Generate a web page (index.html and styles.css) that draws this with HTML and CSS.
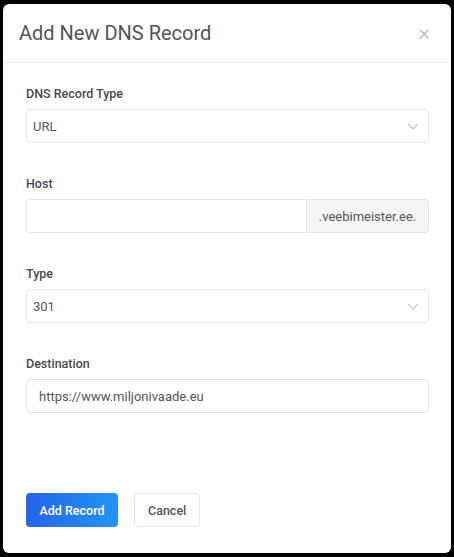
FILE: index.html
```html
<!DOCTYPE html>
<html lang="en">
<head>
    <meta charset="UTF-8">
    <title>Add New DNS Record</title>
    <link rel="stylesheet" href="styles.css">
</head>
<body>
    <div class="modal">
        <div class="modal-header">
            <h2>Add New DNS Record</h2>
            <span class="close">&times;</span>
        </div>

        <form class="modal-body">
            <div class="group">
                <label>DNS Record Type</label>
                <div class="select">
                    <span>URL</span>
                    <svg width="12" height="7" viewBox="0 0 12 7"><path d="M1 1l5 5 5-5" fill="none" stroke="#c4c4cc" stroke-width="1.2"/></svg>
                </div>
            </div>

            <div class="group">
                <label>Host</label>
                <div class="input-group">
                    <input type="text" class="input">
                    <span class="addon">.veebimeister.ee.</span>
                </div>
            </div>

            <div class="group">
                <label>Type</label>
                <div class="select">
                    <span>301</span>
                    <svg width="12" height="7" viewBox="0 0 12 7"><path d="M1 1l5 5 5-5" fill="none" stroke="#c4c4cc" stroke-width="1.2"/></svg>
                </div>
            </div>

            <div class="group">
                <label>Destination</label>
                <input type="text" class="input dest" value="https://www.miljonivaade.eu">
            </div>
        </form>

        <div class="modal-footer">
            <button type="button" class="btn btn-primary">Add Record</button>
            <button type="button" class="btn btn-light">Cancel</button>
        </div>
    </div>
</body>
</html>
```

FILE: styles.css
```css
html, body {
    margin: 0;
    background: #000;
}
body {
    font-family: Roboto, "Liberation Sans", sans-serif;
    padding: 4px 3px 4px 3px;
}
.modal {
    background: #fff;
    border-radius: 6px;
    height: 549px;
    display: flex;
    flex-direction: column;
}
.modal-header {
    height: 58px;
    border-bottom: 1px solid #eef0f4;
    display: flex;
    align-items: center;
    justify-content: space-between;
    padding: 0 21px 0 16px;
}
.modal-header h2 {
    margin: 0;
    font-size: 20px;
    font-weight: 400;
    color: #555;
}
.close {
    font-size: 22px;
    color: #b8b8b8;
    font-weight: 300;
    margin-top: -2px;
}
.modal-body {
    padding: 23px 22px 0 23px;
    flex: 1;
}
.group {
    margin-bottom: 33px;
}
label {
    display: block;
    font-size: 12.5px;
    font-weight: 500;
    color: #484848;
    line-height: 16px;
    margin-bottom: 7px;
}
.select, .input {
    box-sizing: border-box;
    height: 34px;
    border: 1px solid #e6e7ed;
    border-radius: 4px;
    font-size: 13px;
    color: #555;
    font-family: inherit;
}
.select {
    display: flex;
    align-items: center;
    justify-content: space-between;
    padding: 0 9px 0 6px;
}
.input {
    width: 100%;
    padding: 0 12px;
    outline: none;
}
.input-group {
    display: flex;
}
.input-group .input {
    border-radius: 4px 0 0 4px;
    flex: 1;
}
.addon {
    box-sizing: border-box;
    height: 34px;
    width: 122px;
    display: flex;
    align-items: center;
    justify-content: center;
    background: #f5f5f8;
    border: 1px solid #e6e7ed;
    border-left: none;
    border-radius: 0 4px 4px 0;
    font-size: 13px;
    color: #555;
}
.modal-footer {
    display: flex;
    gap: 16px;
    padding: 0 23px 26px 23px;
}
.btn {
    height: 34px;
    border-radius: 4px;
    font-family: inherit;
    font-size: 12.5px;
    font-weight: 500;
    padding: 0 13px;
}
.btn-primary {
    width: 92px;
    border: none;
    color: #fff;
    background: linear-gradient(90deg, #2563eb, #2494f4);
}
.btn-light {
    width: 66px;
    background: #fff;
    border: 1px solid #e6e7ed;
    color: #555;
}
```
